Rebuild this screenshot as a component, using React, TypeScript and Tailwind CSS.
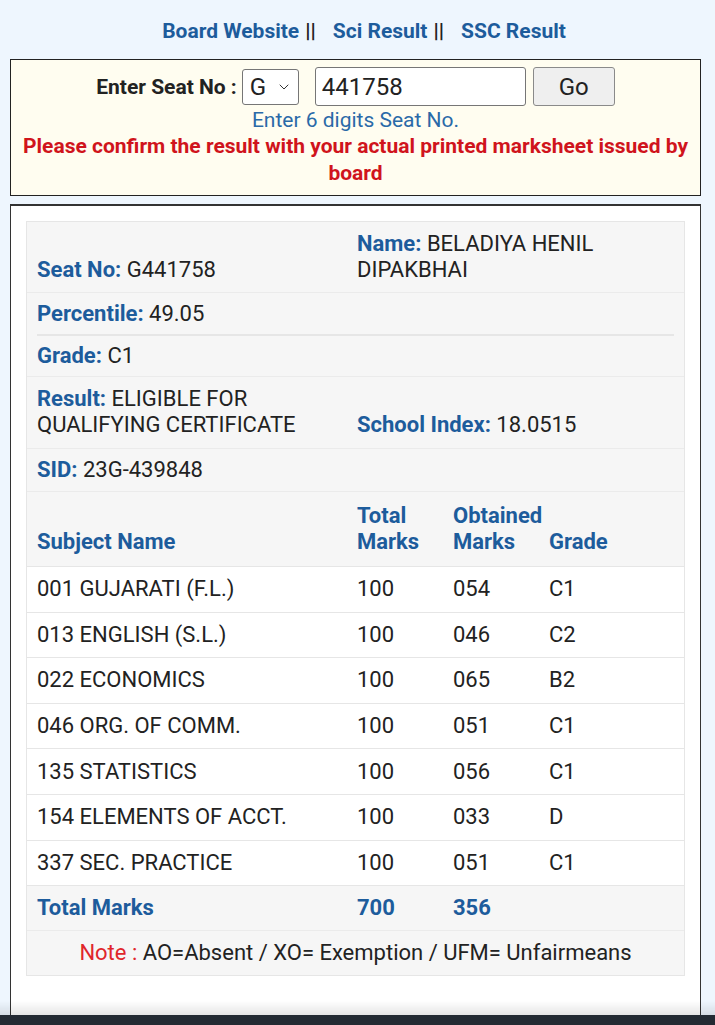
import { ChevronDown } from "lucide-react";

const subjects = [
    ["001 GUJARATI (F.L.)", "100", "054", "C1"],
    ["013 ENGLISH (S.L.)", "100", "046", "C2"],
    ["022 ECONOMICS", "100", "065", "B2"],
    ["046 ORG. OF COMM.", "100", "051", "C1"],
    ["135 STATISTICS", "100", "056", "C1"],
    ["154 ELEMENTS OF ACCT.", "100", "033", "D"],
    ["337 SEC. PRACTICE", "100", "051", "C1"],
];

const cols = "grid grid-cols-[320px_96px_96px_1fr]";

function Label({ children }: { children: React.ReactNode }) {
    return <span className="font-bold text-[#1d5c9c]">{children}</span>;
}

export default function App() {
    return (
        <div className="relative flex h-[1025px] flex-col overflow-hidden bg-[#eef6fe] font-['Roboto',sans-serif] leading-[26px] text-[#222]">
            <div className="pt-[18px] pl-[13px] text-center text-[21px] font-bold">
                <a className="text-[#1d5c9c]">Board Website</a>
                <span className="ml-[6px] text-[#222]">||</span>
                <a className="ml-[17px] text-[#1d5c9c]">Sci Result</a>
                <span className="ml-[6px] text-[#222]">||</span>
                <a className="ml-[17px] text-[#1d5c9c]">SSC Result</a>
            </div>

            <div className="mt-[15px] mr-[14px] ml-[10px] border border-[#222] bg-[#fffdf0] px-[6px] pt-[7px] pb-[8px] text-center text-[21px]">
                <div className="flex items-center justify-center">
                    <span className="font-bold">Enter Seat No :</span>
                    <div className="ml-[5px] flex h-[36px] w-[57px] items-center justify-between rounded-[3px] border border-[#767676] bg-white pr-[6px] pl-[7px] text-[24px]">
                        <span>G</span>
                        <ChevronDown size={16} strokeWidth={1.5} className="text-[#333]" />
                    </div>
                    <div className="ml-[16px] flex h-[39px] w-[211px] items-center rounded-[3px] border border-[#767676] bg-white px-[6px] text-left text-[24px]">
                        441758
                    </div>
                    <button className="ml-[7px] h-[39px] w-[82px] rounded-[3px] border border-[#8a8a8a] bg-[#efefef] text-[24px]">
                        Go
                    </button>
                </div>
                <div className="mt-[1px] text-[#2a6aa8]">Enter 6 digits Seat No.</div>
                <div className="leading-[27px] font-bold text-[#d0141c]">
                    Please confirm the result with your actual printed marksheet issued by board
                </div>
            </div>

            <div className="mt-[8px] mr-[14px] ml-[10px] flex-1 border-x border-t-2 border-[#333] bg-white px-[15px] pt-[15px] text-[22px]">
                <div className="border border-[#e6e6e6] bg-[#f6f6f6]">
                    <div className={`${cols} items-end py-[9px]`}>
                        <div className="px-[10px]">
                            <Label>Seat No:</Label> G441758
                        </div>
                        <div className="col-span-3 px-[10px]">
                            <Label>Name:</Label> BELADIYA HENIL DIPAKBHAI
                        </div>
                    </div>
                    <div className="border-t border-[#ebebeb] px-[10px]">
                        <div className="py-[7.5px]">
                            <Label>Percentile:</Label> 49.05
                        </div>
                        <div className="border-t-2 border-[#e6e6e6] py-[7px]">
                            <Label>Grade:</Label> C1
                        </div>
                    </div>
                    <div className={`${cols} items-end border-t border-[#ebebeb] pt-[9px] pb-[10px]`}>
                        <div className="px-[10px]">
                            <Label>Result:</Label> ELIGIBLE FOR QUALIFYING CERTIFICATE
                        </div>
                        <div className="col-span-3 px-[10px]">
                            <Label>School Index:</Label> 18.0515
                        </div>
                    </div>
                    <div className="border-t border-[#ebebeb] px-[10px] py-[8px]">
                        <Label>SID:</Label> 23G-439848
                    </div>
                    <div className={`${cols} items-end border-t border-[#ebebeb] py-[11px] font-bold text-[#1d5c9c]`}>
                        <div className="px-[10px]">Subject Name</div>
                        <div className="pl-[10px]">
                            Total
                            <br />
                            Marks
                        </div>
                        <div className="pl-[10px] whitespace-nowrap">
                            Obtained
                            <br />
                            Marks
                        </div>
                        <div className="pl-[10px]">Grade</div>
                    </div>
                    {subjects.map((s) => (
                        <div key={s[0]} className={`${cols} items-center border-t border-[#e6e6e6] bg-white py-[9.3px]`}>
                            {s.map((c, i) => (
                                <div key={i} className="pl-[10px] whitespace-nowrap">
                                    {c}
                                </div>
                            ))}
                        </div>
                    ))}
                    <div className={`${cols} items-center border-t border-[#e6e6e6] py-[9px] font-bold text-[#1d5c9c]`}>
                        <div className="pl-[10px]">Total Marks</div>
                        <div className="pl-[10px]">700</div>
                        <div className="pl-[10px]">356</div>
                        <div />
                    </div>
                    <div className="border-t border-[#ebebeb] py-[9px] text-center">
                        <span className="text-[#e0262b]">Note :</span> AO=Absent / XO= Exemption / UFM= Unfairmeans
                    </div>
                </div>
            </div>

            <div className="fixed inset-x-0 bottom-0">
                <div className="h-[14px] bg-gradient-to-b from-transparent to-black/10" />
                <div className="h-[10px] bg-[#232a33]" />
            </div>
        </div>
    );
}
